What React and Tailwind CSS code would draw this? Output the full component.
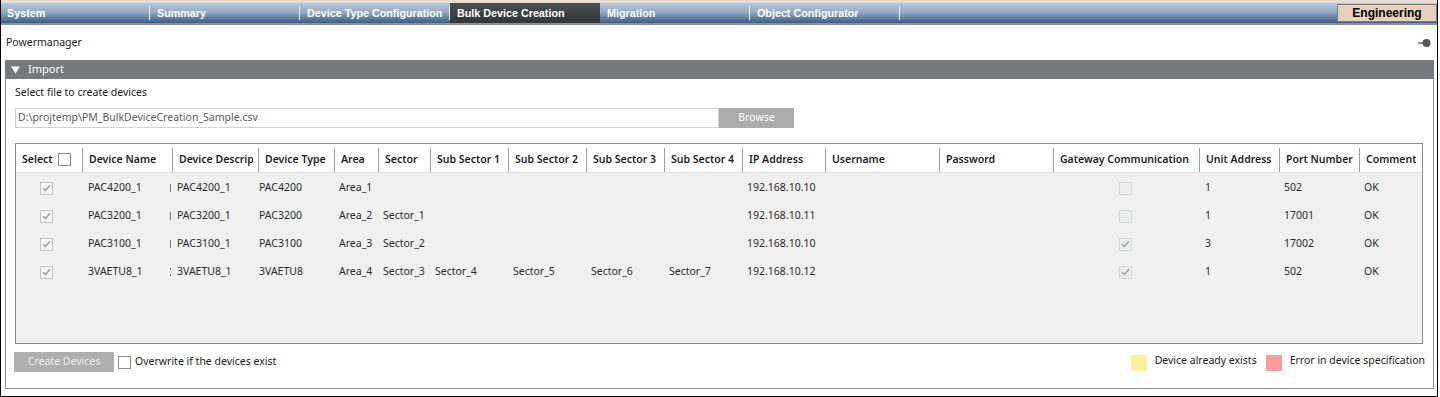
import React from "react";

const tabs = [
  { label: "System", w: "w-[149px] pl-[6px]" },
  { label: "Summary", w: "w-[150px] pl-[7px]" },
  { label: "Device Type Configuration", w: "w-[150px] pl-[7px]" },
  { label: "Bulk Device Creation", w: "w-[150px] pl-[7px]", active: true },
  { label: "Migration", w: "w-[150px] pl-[7px]" },
  { label: "Object Configurator", w: "w-[150px] pl-[7px]" },
];

const columns = [
  { key: "sel", label: "Select", w: "w-[66px]", pl: "pl-[24px]" },
  { key: "name", label: "Device Name", w: "w-[80px]", pl: "pl-[6px]" },
  { key: "hidden", label: "", w: "w-[10px]", pl: "pl-[8px]" },
  { key: "desc", label: "Device Description", w: "w-[86px]", pl: "pl-[5px]" },
  { key: "type", label: "Device Type", w: "w-[76px]", pl: "pl-[1px]" },
  { key: "area", label: "Area", w: "w-[44px]", pl: "pl-[5px]" },
  { key: "sector", label: "Sector", w: "w-[52px]", pl: "pl-[5px]" },
  { key: "s1", label: "Sub Sector 1", w: "w-[78px]", pl: "pl-[5px]" },
  { key: "s2", label: "Sub Sector 2", w: "w-[78px]", pl: "pl-[5px]" },
  { key: "s3", label: "Sub Sector 3", w: "w-[78px]", pl: "pl-[5px]" },
  { key: "s4", label: "Sub Sector 4", w: "w-[78px]", pl: "pl-[5px]" },
  { key: "ip", label: "IP Address", w: "w-[83px]", pl: "pl-[5px]" },
  { key: "user", label: "Username", w: "w-[114px]", pl: "pl-[5px]" },
  { key: "pass", label: "Password", w: "w-[114px]", pl: "pl-[5px]" },
  { key: "gw", label: "Gateway Communication", w: "w-[146px]", pl: "pl-[66px]" },
  { key: "unit", label: "Unit Address", w: "w-[80px]", pl: "pl-[6px]" },
  { key: "port", label: "Port Number", w: "w-[80px]", pl: "pl-[5px]" },
  { key: "comment", label: "Comment", w: "w-[63px]", pl: "pl-[5px]" },
];

const rows = [
  { name: "PAC4200_1", type: "PAC4200", area: "Area_1", ip: "192.168.10.10", gw: false, unit: "1", port: "502" },
  { name: "PAC3200_1", type: "PAC3200", area: "Area_2", sector: "Sector_1", ip: "192.168.10.11", gw: false, unit: "1", port: "17001" },
  { name: "PAC3100_1", type: "PAC3100", area: "Area_3", sector: "Sector_2", ip: "192.168.10.10", gw: true, unit: "3", port: "17002" },
  {
    name: "3VAETU8_1", type: "3VAETU8", area: "Area_4", sector: "Sector_3",
    s1: "Sector_4", s2: "Sector_5", s3: "Sector_6", s4: "Sector_7",
    ip: "192.168.10.12", gw: true, unit: "1", port: "502",
  },
];

function Box({ checked, tone }) {
  const styles = {
    header: "border-[#8e8e8e] bg-white",
    row: "border-[#c4c4c4] bg-[#f6f6f6]",
    gw: "border-[#d4d8d8] bg-[#eceeee]",
  };
  return (
    <div className={`w-[13px] h-[13px] border flex items-center justify-center ${styles[tone]}`}>
      {checked && (
        <svg width="9" height="8" viewBox="0 0 9 8">
          <path d="M1 4.3 L3.4 6.6 L8 1.2" fill="none" stroke="#9c9c9c" strokeWidth="1.4" />
        </svg>
      )}
    </div>
  );
}

// the squeezed hidden column only shows a sliver of the first glyph
function Sliver({ name }) {
  if (name.startsWith("3")) {
    return (
      <div className="flex flex-col gap-[4px] w-px">
        <div className="w-px h-[2px] bg-[#666]" />
        <div className="w-px h-[2px] bg-[#666]" />
      </div>
    );
  }
  return <div className="w-px h-[8px] bg-[#777]" />;
}

function cellValue(col, row) {
  if (col.key === "sel") return <Box checked tone="row" />;
  if (col.key === "gw") return <Box checked={row.gw} tone="gw" />;
  if (col.key === "hidden") return <Sliver name={row.name} />;
  if (col.key === "desc") return row.name;
  if (col.key === "comment") return "OK";
  return row[col.key] || "";
}

export default function App() {
  return (
    <div className="w-[1440px] h-[397px] bg-white">
      <div className="w-[1438px] h-[397px] border-x border-b border-black flex flex-col font-['Noto_Sans',sans-serif] text-[10.5px] text-[#2b2b2b]">
        {/* top strip + tab bar */}
        <div className="h-[3px] bg-[#ecdcd0]" />
        <div className="h-[20px] flex items-center bg-[linear-gradient(to_bottom,#b8c9db,#93abc6_45%,#5a779c_80%,#3f5f87)]">
          {tabs.map((t) => (
            <div
              key={t.label}
              className={`${t.w} h-full shrink-0 flex items-center justify-between font-['Liberation_Sans',sans-serif] font-bold text-[10.75px] text-white ${
                t.active ? "bg-[linear-gradient(to_bottom,#4a4e4e,#323636)]" : ""
              }`}
            >
              <span className="whitespace-nowrap">{t.label}</span>
              {!t.active && <span className="w-px h-[14px] bg-[#eef2f7]" />}
            </div>
          ))}
          <div className="flex-1" />
          <div className="w-[100px] h-[18px] border border-[#7b7b7b] bg-[#e7d0c0] flex items-center justify-center font-['Liberation_Sans',sans-serif] font-bold text-[12px] text-black">
            Engineering
          </div>
        </div>
        <div className="h-[2px] bg-[#8a9098]" />

        {/* title row */}
        <div className="h-[35px] flex items-center justify-between pl-[5px] pr-[6px]">
          <span className="text-[#1a1a1a]">Powermanager</span>
          <svg width="13" height="8" viewBox="0 0 13 8">
            <line x1="0" y1="4" x2="6" y2="4" stroke="#555" strokeWidth="1.4" />
            <circle cx="8.5" cy="4" r="4" fill="#555" />
          </svg>
        </div>

        {/* Import section */}
        <div className="ml-[4px] mr-[3px] flex flex-col">
          <div className="h-[19px] bg-[#777a7c] flex items-center pl-[6px] text-white">
            <svg width="9" height="8" viewBox="0 0 9 8">
              <polygon points="0,0.5 9,0.5 4.5,7.5" fill="#fff" />
            </svg>
            <span className="ml-[8px] text-[11px]">Import</span>
          </div>
          <div className="h-[310px] border-x border-b border-[#8f8f8f] pl-[9px] pr-[8px] flex flex-col">
            <div className="pt-[6px] leading-[15px] text-[#1a1a1a]">Select file to create devices</div>

            <div className="mt-[8px] h-[20px] flex">
              <div className="w-[704px] h-full border border-[#d2d2d2] flex items-center pl-[2px] text-[#5c5c5c]">
                {"D:\\projtemp\\PM_BulkDeviceCreation_Sample.csv"}
              </div>
              <div className="w-[75px] h-full bg-[#ababab] flex items-center justify-center text-white">Browse</div>
            </div>

            {/* table */}
            <div className="mt-[15px] w-[1408px] h-[201px] border border-[#8c8c8c] bg-[#f0f0f0] flex flex-col">
              <div className="h-[29px] bg-white border-b border-[#e2e2e2] flex shrink-0">
                {columns.map((c, i) => (
                  <div key={c.key} className={`${c.w} shrink-0 h-full flex items-center`}>
                    {i > 0 && <div className="w-px h-[24px] self-end bg-[#9e9e9e]" />}
                    <div className="flex-1 min-w-0 pl-[6px] pr-[5px] pt-[3px] flex items-center">
                      <div className="overflow-hidden whitespace-nowrap font-semibold text-[#1e1e1e]">{c.label}</div>
                      {c.key === "sel" && (
                        <div className="ml-[5px] shrink-0">
                          <Box tone="header" />
                        </div>
                      )}
                    </div>
                  </div>
                ))}
              </div>
              {rows.map((r) => (
                <div key={r.name} className="h-[28px] pt-[2px] flex items-center shrink-0">
                  {columns.map((c) => (
                    <div key={c.key} className={`${c.w} ${c.pl} shrink-0 overflow-hidden whitespace-nowrap`}>
                      {cellValue(c, r)}
                    </div>
                  ))}
                </div>
              ))}
            </div>

            {/* bottom actions + legend */}
            <div className="mt-[8px] h-[20px] flex items-center justify-between">
              <div className="flex items-center h-full">
                <div className="ml-[-1px] w-[100px] h-full bg-[#afafaf] flex items-center justify-center text-[#ededed]">
                  Create Devices
                </div>
                <div className="ml-[4px] w-[13px] h-[13px] border border-[#8c8c8c] bg-white" />
                <span className="ml-[4px] text-[#1a1a1a]">Overwrite if the devices exist</span>
              </div>
              <div className="flex items-center text-[#1a1a1a]">
                <div className="w-[16px] h-[16px] bg-[#fdf09b] mt-[2px]" />
                <span className="ml-[8px] mb-[2px]">Device already exists</span>
                <div className="ml-[9px] w-[16px] h-[16px] bg-[#fb9d9d] mt-[2px]" />
                <span className="ml-[8px] mb-[2px]">Error in device specification</span>
              </div>
            </div>
          </div>
        </div>
      </div>
    </div>
  );
}
